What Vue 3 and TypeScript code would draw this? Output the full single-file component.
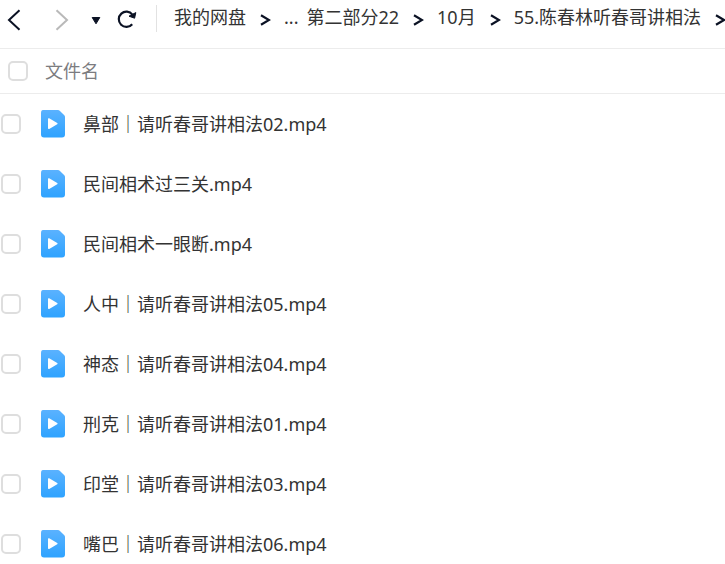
<script setup lang="ts">
import { computed, ref } from 'vue'

interface Crumb {
  label: string
  arrow: boolean
}

const crumbs: Crumb[] = [
  { label: '我的网盘', arrow: true },
  { label: '...', arrow: false },
  { label: '第二部分22', arrow: true },
  { label: '10月', arrow: true },
  { label: '55.陈春林听春哥讲相法', arrow: true },
]

const files: string[] = [
  '鼻部｜请听春哥讲相法02.mp4',
  '民间相术过三关.mp4',
  '民间相术一眼断.mp4',
  '人中｜请听春哥讲相法05.mp4',
  '神态｜请听春哥讲相法04.mp4',
  '刑克｜请听春哥讲相法01.mp4',
  '印堂｜请听春哥讲相法03.mp4',
  '嘴巴｜请听春哥讲相法06.mp4',
]

const selected = ref<string[]>([])
const allSelected = computed<boolean>({
  get: () => selected.value.length === files.length,
  set: (on) => {
    selected.value = on ? [...files] : []
  },
})
</script>

<template>
  <main class="browser">
    <header class="toolbar">
      <div class="controls">
        <button type="button" class="tool" aria-label="后退">
          <svg width="14" height="22" viewBox="0 0 14 22"><path d="M12.500 1.200 2 11l10.500 9.800" fill="none" stroke="#0b1224" stroke-width="2" /></svg>
        </button>
        <button type="button" class="tool forward" aria-label="前进" disabled>
          <svg width="14" height="22" viewBox="0 0 14 22"><path d="M1.500 1.200 12 11 1.500 20.800" fill="none" stroke="#b9b9b9" stroke-width="2" /></svg>
        </button>
        <button type="button" class="tool history" aria-label="历史记录">
          <svg width="10" height="10" viewBox="0 0 10 10"><path d="M1.200 2.500h7.600L5 8.800z" fill="#0b1224" stroke="#0b1224" stroke-width="1" stroke-linejoin="round" /></svg>
        </button>
        <button type="button" class="tool refresh" aria-label="刷新">
          <svg width="20" height="20" viewBox="0 0 20 20">
            <path d="M15.400 4.600A7.600 7.600 0 1 0 15.200 14.200" fill="none" stroke="#0b1224" stroke-width="2.200" />
            <path d="M12 6.200 14.600 4.800 18.800 2.600 17.600 8.200z" fill="#0b1224" stroke="#0b1224" stroke-width="1" stroke-linejoin="round" />
          </svg>
        </button>
      </div>
      <nav class="crumbs" aria-label="路径">
        <template v-for="crumb in crumbs" :key="crumb.label">
          <a href="#" class="crumb" :class="{ plain: !crumb.arrow }">{{ crumb.label }}</a>
          <svg v-if="crumb.arrow" class="arrow" width="11" height="12" viewBox="0 0 11 12"><path d="M1 1.200 9 6 1 10.800" fill="none" stroke="#0b1224" stroke-width="2.200" /></svg>
        </template>
      </nav>
    </header>

    <table class="files">
      <thead>
        <tr>
          <th class="pick"><input v-model="allSelected" type="checkbox" class="box" aria-label="全选" /></th>
          <th class="title" scope="col">文件名</th>
        </tr>
      </thead>
      <tbody>
        <tr v-for="(file, i) in files" :key="file">
          <td class="pick"><input :id="`file-${i}`" v-model="selected" type="checkbox" class="box" :value="file" /></td>
          <td>
            <label class="name" :for="`file-${i}`">
              <svg width="26" height="28" viewBox="0 0 26 28">
                <defs>
                  <linearGradient :id="`fill-${i}`" x1="0" y1="0" x2="0" y2="1">
                    <stop offset="0" stop-color="#5ab2ff" />
                    <stop offset="1" stop-color="#2fa3ff" />
                  </linearGradient>
                </defs>
                <path d="M3 0h15q1 0 1.700.7l4.600 4.600q.7.700.7 1.700v17.500q0 3-3 3H4q-3 0-3-3V3q0-3 2-3z" :fill="`url(#fill-${i})`" />
                <path d="M8.800 9v9.200L16.800 13.600z" fill="#fff" stroke="#fff" stroke-width="1.600" stroke-linejoin="round" />
              </svg>
              <span>{{ file }}</span>
            </label>
          </td>
        </tr>
      </tbody>
    </table>
  </main>
</template>

<style>
body {
  background: #fff;
}
</style>

<style scoped>
.browser {
  height: 100vh;
  overflow: hidden;
  font-family: "Noto Sans", "Noto Sans CJK SC", sans-serif;
  font-size: 18px;
  line-height: 24px;
  color: #333;
}

.toolbar {
  display: flex;
  align-items: flex-start;
  height: 48px;
  padding-top: 5px;
  box-sizing: border-box;
}

.controls {
  display: flex;
  align-items: center;
  flex: none;
  height: 27px;
  padding: 2px 19px 0 7px;
  box-sizing: border-box;
  border-right: 1px solid #e2e2e2;
}

.tool {
  display: flex;
  padding: 0;
  border: 0;
  background: none;
}

.forward {
  margin-left: 34px;
}

.history {
  margin-left: 22px;
}

.refresh {
  margin-left: 16px;
}

.crumbs {
  display: flex;
  align-items: center;
  flex: 1;
  min-width: 0;
  overflow: hidden;
  padding-left: 17px;
  white-space: nowrap;
}

.crumb {
  flex: none;
  margin-right: 14px;
  color: #333;
  text-decoration: none;
}

.plain {
  margin-right: 8px;
}

.arrow {
  flex: none;
  margin: 5px 13px 0 0;
}

.files {
  width: 100%;
  border-collapse: separate;
  border-spacing: 0;
}

th {
  height: 46px;
  padding: 0;
  box-sizing: border-box;
  border-top: 1px solid #ececec;
  border-bottom: 1px solid #ececec;
  font-weight: 400;
  text-align: left;
  color: #7c7c80;
}

td {
  height: 60px;
  padding: 0;
}

.pick {
  width: 40px;
  padding-left: 1px;
  box-sizing: border-box;
}

th.pick {
  padding-left: 8px;
}

.title {
  padding-left: 5px;
}

.box {
  display: block;
  width: 20px;
  height: 20px;
  margin: 0;
  box-sizing: border-box;
  appearance: none;
  border: 2px solid #dedede;
  border-radius: 5px;
  background: #fff;
}

.box:checked {
  border-color: #2fa3ff;
  background: #2fa3ff;
}

.name {
  display: flex;
  align-items: center;
  gap: 17px;
  white-space: nowrap;
}
</style>
